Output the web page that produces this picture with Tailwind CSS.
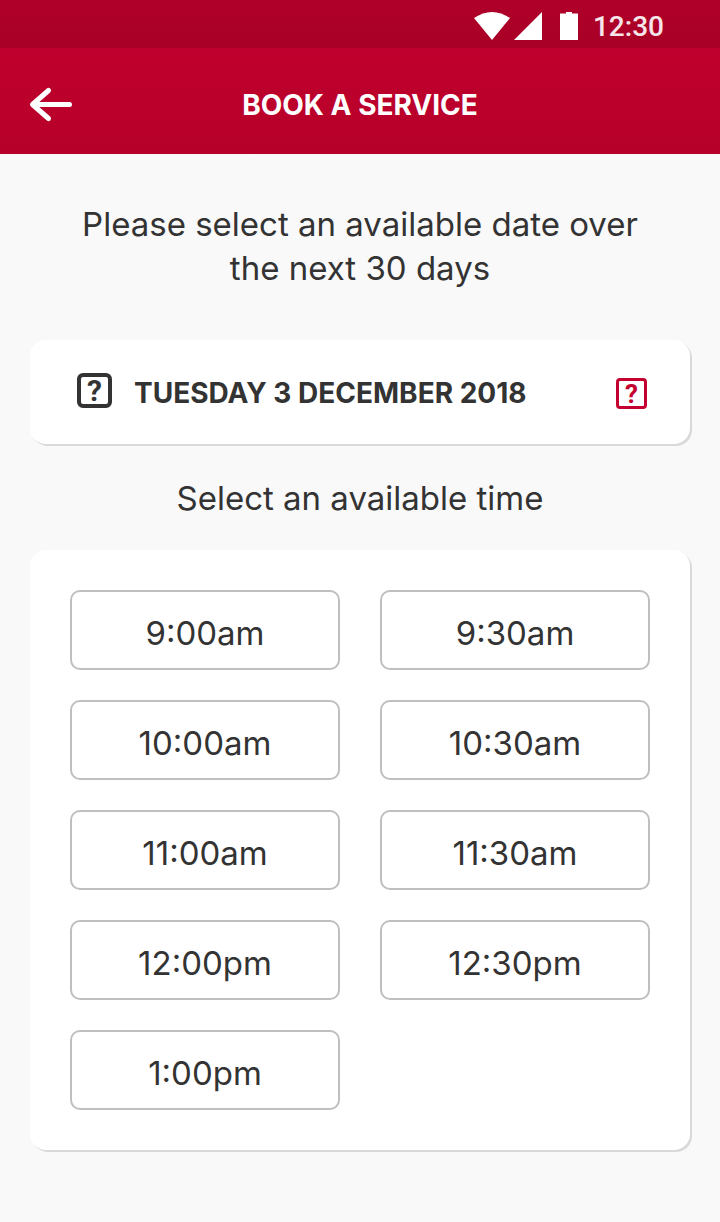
<!DOCTYPE html>
<html lang="en">
<head>
<meta charset="utf-8">
<meta name="viewport" content="width=device-width, initial-scale=1">
<title>Book a service</title>
<script src="https://cdn.jsdelivr.net/npm/@tailwindcss/browser@4"></script>
</head>
<body class="min-h-screen bg-[#f9f9f9] font-['Inter',sans-serif] text-[#333333]">
<div class="flex h-12 items-center justify-end bg-linear-to-b from-[#b00029] to-[#a80026] pr-14">
  <svg class="h-12 w-28" viewBox="0 0 112 48" fill="#fff" aria-hidden="true">
    <path d="M1 18Q19 6 37 18L19 40Z"/>
    <path d="M69 12V40H41Z"/>
    <path d="M87 13.500H93V12H99V13.500H105V40H87Z"/>
  </svg>
  <span class="ml-2 mt-1.5 font-['Roboto',sans-serif] text-[28px] leading-8 font-medium text-white/90">12:30</span>
</div>
<header class="grid h-[106px] grid-cols-[84px_1fr_84px] items-center bg-linear-to-b from-[#c0002e] to-[#b60029]">
  <button type="button" aria-label="Back" class="ml-7 mt-2 flex size-12 items-center">
    <svg class="size-12" viewBox="0 0 48 48" fill="none" stroke="#fff" stroke-width="5" stroke-linecap="round" stroke-linejoin="round" aria-hidden="true"><path d="M20.500 9.500L4.500 23.500L20.500 37.500M5 23.500H41.500"/></svg>
  </button>
  <h1 class="mt-2 text-center text-[28px] leading-8 font-bold text-white">BOOK A SERVICE</h1>
</header>
<main class="px-[30px] pt-12 pb-[72px]">
  <p class="mx-auto max-w-[600px] text-center text-[33px] leading-11">Please select an available date over the next 30 days</p>
  <button type="button" class="mt-[50px] flex h-26 w-full items-center rounded-2xl bg-white pr-[43px] pl-[47px] shadow-[1px_1px_0_#d9d9d9,2px_2px_0_#d9d9d9]">
    <span aria-hidden="true" class="mb-1 flex size-[35px] items-center justify-center rounded-md border-4 border-[#333333] pt-0.5 font-['Roboto',sans-serif] text-[30px] leading-7 font-bold">?</span>
    <span class="ml-[22px] mt-0.5 flex-1 text-left text-[28px] leading-8 font-bold">TUESDAY 3 DECEMBER 2018</span>
    <span aria-hidden="true" class="mt-0.5 flex size-[31px] items-center justify-center rounded-sm border-[3px] border-[#c3002f] pt-0.5 font-['Roboto',sans-serif] text-[26px] leading-6 font-bold text-[#c3002f]">?</span>
  </button>
  <h2 class="mt-8 text-center text-[33px] leading-11">Select an available time</h2>
  <div class="mt-[30px] grid grid-cols-2 gap-x-10 gap-y-[30px] rounded-2xl bg-white p-10 text-[33px] shadow-[1px_1px_0_#d9d9d9,2px_2px_0_#d9d9d9]">
    <button type="button" class="h-20 rounded-[10px] border-2 border-[#bfbfbf] pt-2">9:00am</button>
    <button type="button" class="h-20 rounded-[10px] border-2 border-[#bfbfbf] pt-2">9:30am</button>
    <button type="button" class="h-20 rounded-[10px] border-2 border-[#bfbfbf] pt-2">10:00am</button>
    <button type="button" class="h-20 rounded-[10px] border-2 border-[#bfbfbf] pt-2">10:30am</button>
    <button type="button" class="h-20 rounded-[10px] border-2 border-[#bfbfbf] pt-2">11:00am</button>
    <button type="button" class="h-20 rounded-[10px] border-2 border-[#bfbfbf] pt-2">11:30am</button>
    <button type="button" class="h-20 rounded-[10px] border-2 border-[#bfbfbf] pt-2">12:00pm</button>
    <button type="button" class="h-20 rounded-[10px] border-2 border-[#bfbfbf] pt-2">12:30pm</button>
    <button type="button" class="h-20 rounded-[10px] border-2 border-[#bfbfbf] pt-2">1:00pm</button>
  </div>
</main>
</body>
</html>
